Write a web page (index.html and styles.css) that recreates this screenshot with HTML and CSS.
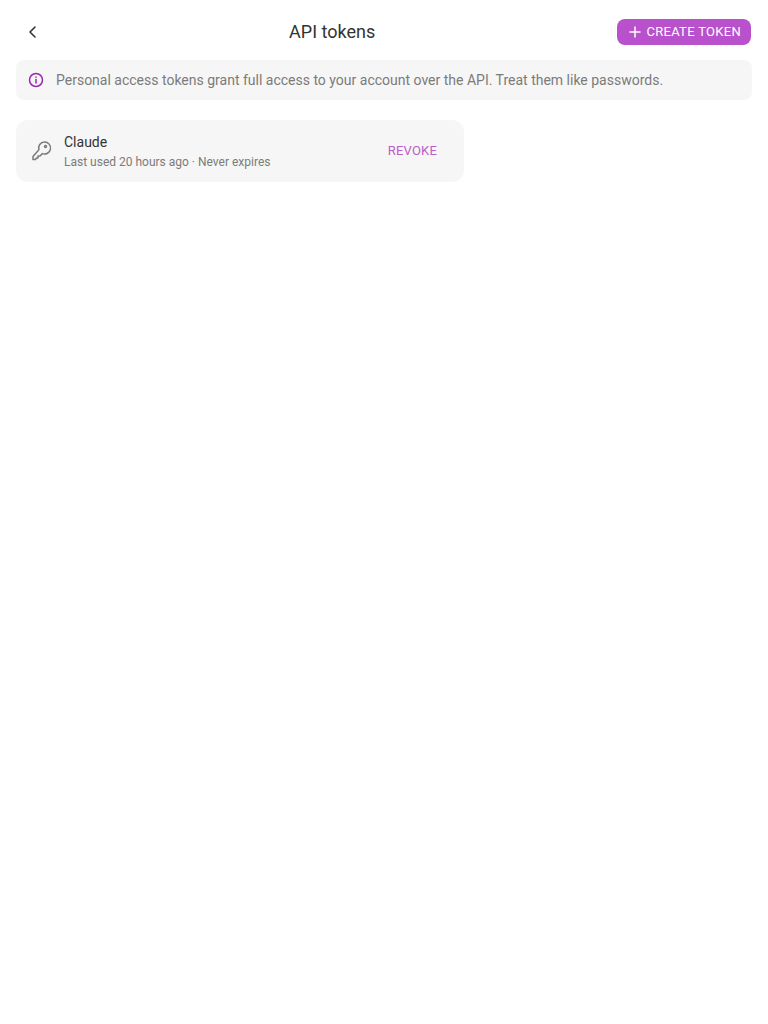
FILE: index.html
```html
<!DOCTYPE html>
<html lang="en">
    <head>
        <meta charset="UTF-8" />
        <meta name="viewport" content="width=device-width, initial-scale=1.0" />
        <title>API tokens</title>
        <link rel="stylesheet" href="styles.css">
    </head>
    <body>
        <header class="topbar">
            <a href="#" class="back" aria-label="Back">
                <svg width="24" height="24" viewBox="0 0 24 24" fill="none" stroke="currentColor" stroke-width="1.6" stroke-linecap="round" stroke-linejoin="round">
                    <path d="M15 7l-5 5 5 5" />
                </svg>
            </a>
            <h1 class="title">API tokens</h1>
            <button class="create-btn">
                <svg width="12" height="12" viewBox="0 0 12 12" fill="none" stroke="currentColor" stroke-width="1.500" stroke-linecap="round">
                    <path d="M6 1v10M1 6h10" />
                </svg>
                <span class="create-label">CREATE TOKEN</span>
            </button>
        </header>

        <div class="notice">
            <svg class="notice-icon" width="16" height="16" viewBox="0 0 16 16" fill="none" stroke="currentColor" stroke-width="1.5" stroke-linecap="round">
                <circle cx="8" cy="8" r="6.5" />
                <path d="M8 7.5v3.5" />
                <path d="M8 5v.2" />
            </svg>
            <span>Personal access tokens grant full access to your account over the API. Treat them like passwords.</span>
        </div>

        <div class="token">
            <svg class="token-icon" width="24" height="24" viewBox="0 0 24 24" fill="none" stroke="currentColor" stroke-width="1.5" stroke-linecap="round" stroke-linejoin="round">
                <path d="M14.500 3a6 6 0 1 1-2.100 11.600L10 17H8V19H6.500L5.500 20.500H3V17.500L8.900 10.800A6 6 0 0 1 14.500 3Z" />
                <circle cx="15.500" cy="7.500" r="1" />
            </svg>
            <div class="token-info">
                <div class="token-name">Claude</div>
                <div class="token-meta">Last used 20 hours ago · Never expires</div>
            </div>
            <button class="revoke-btn">REVOKE</button>
        </div>
    </body>
</html>
```

FILE: styles.css
```css
* {
    box-sizing: border-box;
}

body {
    margin: 0;
    padding: 0 16px;
    background-color: #fff;
    font-family: Roboto, "Liberation Sans", sans-serif;
    color: #333;
}

button {
    font-family: inherit;
    border: none;
    cursor: pointer;
}

.topbar {
    display: flex;
    justify-content: space-between;
    align-items: center;
    height: 60px;
    padding-top: 4px;
}

.back {
    display: flex;
    width: 31px;
    padding-left: 4px;
    color: #333;
}

.title {
    margin: 0;
    font-size: 18px;
    font-weight: 400;
    line-height: 24px;
}

.create-btn {
    display: flex;
    align-items: center;
    gap: 5px;
    height: 26px;
    margin-right: 1px;
    padding: 0 10px 0 12px;
    border-radius: 8px;
    background-color: #b950cc;
    color: #fff;
    font-size: 13px;
    letter-spacing: 0.3px;
}

.create-label {
    margin-top: -2px;
}

.notice {
    display: flex;
    align-items: center;
    gap: 12px;
    height: 40px;
    padding: 0 12px;
    border-radius: 8px;
    background-color: #f6f6f6;
    color: #7b7b7b;
    font-size: 14px;
}

.notice-icon {
    color: #9c27b0;
    flex-shrink: 0;
}

.token {
    display: flex;
    align-items: center;
    width: 448px;
    height: 62px;
    margin-top: 20px;
    padding: 0 15px 0 14px;
    border-radius: 12px;
    background-color: #f6f6f6;
}

.token-icon {
    color: #7b7b7b;
    flex-shrink: 0;
}

.token-info {
    flex: 1;
    margin-left: 10px;
}

.token-name {
    font-size: 14px;
    line-height: 20px;
}

.token-meta {
    margin-top: 2px;
    color: #7b7b7b;
    font-size: 12px;
    line-height: 16px;
}

.revoke-btn {
    padding: 0 12px;
    margin-top: -2px;
    background: none;
    color: #b85fc9;
    font-size: 13px;
    letter-spacing: 0.2px;
}
```
